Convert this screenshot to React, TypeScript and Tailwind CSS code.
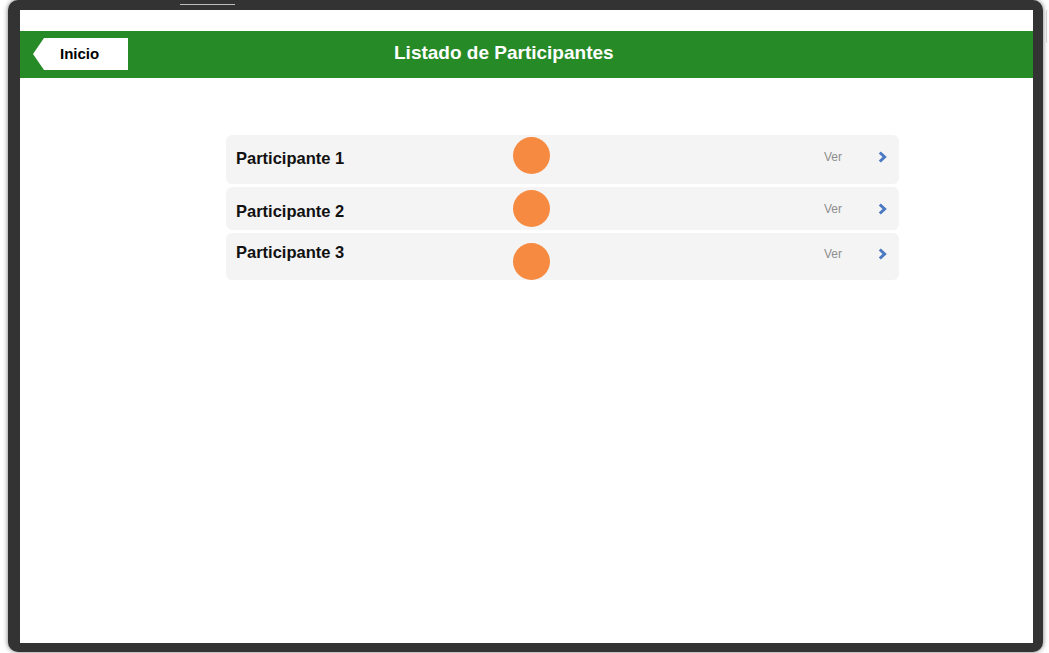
const rows = [
  { name: 'Participante 1', row: 'h-[49px]', text: 'mt-[13px]', dot: 'mt-[2px]', ver: 'mt-[15px]', chev: 'mt-[16px]' },
  { name: 'Participante 2', row: 'h-[43px]', text: 'mt-[14px]', dot: 'mt-[3px]', ver: 'mt-[15px]', chev: 'mt-[16px]' },
  { name: 'Participante 3', row: 'h-[47px]', text: 'mt-[9px]', dot: 'mt-[10px]', ver: 'mt-[14px]', chev: 'mt-[15px]' },
]

const Chevron = () => (
  <svg width="9" height="12" viewBox="0 0 9 12">
    <path d="M1.8 1.5 L6.6 6 L1.8 10.5" fill="none" stroke="#4b79c2" strokeWidth="3" strokeLinejoin="miter" />
  </svg>
)

const App = () => {
  return (
    <div className="relative w-[1049px] h-[653px] overflow-hidden bg-white font-['Liberation_Sans',Arial,sans-serif]">
      {/* tablet frame */}
      <div className="ml-[8px] w-[1035px] h-[652px] rounded-[10px] bg-[#333333] pt-[10px] pl-[12px] shadow-[0_0_5px_rgba(0,0,0,0.55)]">
        <div className="w-[1013px] h-[633px] bg-white pt-[21px]">
          <header className="flex h-[47px] items-start bg-[#268a27]">
            <button className="ml-[13px] mt-[7px] flex h-[32px] w-[95px] items-center bg-white pl-[27px] pt-[1px] text-[15px] font-bold text-black [clip-path:polygon(11px_0,100%_0,100%_100%,11px_100%,0_50%)]">
              Inicio
            </button>
            <h1 className="ml-[266px] mt-[11px] text-[19px] leading-[22px] font-bold text-white">Listado de Participantes</h1>
          </header>

          <div className="ml-[206px] mt-[57px] flex w-[673px] flex-col gap-[3px]">
            {rows.map((r) => (
              <div key={r.name} className={`flex items-start rounded-[6px] bg-[#f4f4f4] pl-[10px] pr-[12px] ${r.row}`}>
                <span className={`w-[277px] text-[16.5px] leading-[20px] font-bold text-[#111] ${r.text}`}>{r.name}</span>
                <span className={`h-[37px] w-[37px] rounded-full bg-[#f68a41] ${r.dot}`} />
                <span className="flex-1" />
                <span className={`text-[12px] leading-[14px] text-[#8e8e8e] ${r.ver}`}>Ver</span>
                <span className={`ml-[36px] flex ${r.chev}`}>
                  <Chevron />
                </span>
              </div>
            ))}
          </div>
        </div>
      </div>

      {/* speaker slit and side button */}
      <div className="absolute left-[180px] top-[4px] h-[1px] w-[55px] bg-[#bdbdbd]" />
      <div className="absolute left-[1046px] top-[10px] h-[33px] w-[3px] rounded-l-[2px] border-l border-[#d0d0d0]" />
    </div>
  )
}

export default App
